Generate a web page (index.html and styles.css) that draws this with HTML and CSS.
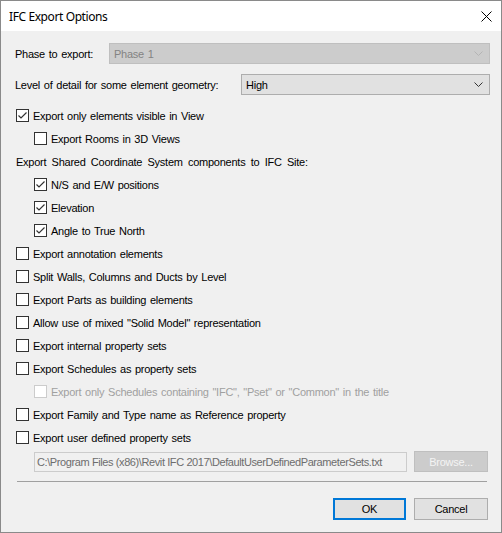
FILE: index.html
```html
<!DOCTYPE html>
<html>
<head>
<meta charset="utf-8">
<link rel="stylesheet" href="styles.css">
</head>
<body>
<div class="window">
  <div class="titlebar">
    <span class="title">IFC Export Options</span>
    <svg class="close" width="11" height="11" viewBox="0 0 11 11"><path d="M0.5 0.5 L10.5 10.5 M10.5 0.5 L0.5 10.5" stroke="#000" stroke-width="1"/></svg>
  </div>
  <div class="content">
    <div class="field phase">
      <span class="label">Phase to export:</span>
      <div class="combo disabled">
        <span>Phase 1</span>
        <svg class="chev" width="9" height="5" viewBox="0 0 9 5"><path d="M0.5 0.5 L4.5 4.5 L8.5 0.5" fill="none" stroke="#b4b4b4" stroke-width="1"/></svg>
      </div>
    </div>
    <div class="field level">
      <span class="label">Level of detail for some element geometry:</span>
      <div class="combo high">
        <span>High</span>
        <svg class="chev" width="9" height="5" viewBox="0 0 9 5"><path d="M0.5 0.5 L4.5 4.5 L8.5 0.5" fill="none" stroke="#333" stroke-width="1"/></svg>
      </div>
    </div>
    <div class="rows">
      <div class="row"><span class="box checked"><svg width="11" height="11" viewBox="0 0 11 11"><path d="M1.5 5.5 L4 8 L9.5 2.5" fill="none" stroke="#333" stroke-width="1.2"/></svg></span><span>Export only elements visible in View</span></div>
      <div class="row ind"><span class="box"></span><span>Export Rooms in 3D Views</span></div>
      <div class="row"><span class="plain">Export Shared Coordinate System components to IFC Site:</span></div>
      <div class="row ind"><span class="box checked"><svg width="11" height="11" viewBox="0 0 11 11"><path d="M1.5 5.5 L4 8 L9.5 2.5" fill="none" stroke="#333" stroke-width="1.2"/></svg></span><span>N/S and E/W positions</span></div>
      <div class="row ind"><span class="box checked"><svg width="11" height="11" viewBox="0 0 11 11"><path d="M1.5 5.5 L4 8 L9.5 2.5" fill="none" stroke="#333" stroke-width="1.2"/></svg></span><span>Elevation</span></div>
      <div class="row ind"><span class="box checked"><svg width="11" height="11" viewBox="0 0 11 11"><path d="M1.5 5.5 L4 8 L9.5 2.5" fill="none" stroke="#333" stroke-width="1.2"/></svg></span><span>Angle to True North</span></div>
      <div class="row"><span class="box"></span><span>Export annotation elements</span></div>
      <div class="row"><span class="box"></span><span>Split Walls, Columns and Ducts by Level</span></div>
      <div class="row"><span class="box"></span><span>Export Parts as building elements</span></div>
      <div class="row"><span class="box"></span><span>Allow use of mixed "Solid Model" representation</span></div>
      <div class="row"><span class="box"></span><span>Export internal property sets</span></div>
      <div class="row"><span class="box"></span><span>Export Schedules as property sets</span></div>
      <div class="row ind dis"><span class="box"></span><span>Export only Schedules containing "IFC", "Pset" or "Common" in the title</span></div>
      <div class="row"><span class="box"></span><span>Export Family and Type name as Reference property</span></div>
      <div class="row"><span class="box"></span><span>Export user defined property sets</span></div>
    </div>
    <div class="pathrow">
      <div class="textbox">C:\Program Files (x86)\Revit IFC 2017\DefaultUserDefinedParameterSets.txt</div>
      <div class="btn btn-dis">Browse...</div>
    </div>
    <div class="sep"></div>
    <div class="actions">
      <div class="btn ok">OK</div>
      <div class="btn">Cancel</div>
    </div>
  </div>
</div>
</body>
</html>
```

FILE: styles.css
```css
html, body {
  margin: 0;
  padding: 0;
  background: #f0f0f0;
}
.window {
  width: 502px;
  height: 533px;
  box-sizing: border-box;
  border: 1px solid #8a8a8a;
  background: #f0f0f0;
  font-family: "Liberation Sans", Arial, sans-serif;
  font-size: 11px;
  letter-spacing: -0.25px;
  word-spacing: 1px;
  color: #000;
  display: flex;
  flex-direction: column;
}
.titlebar {
  height: 30px;
  background: #fff;
  display: flex;
  align-items: center;
  justify-content: space-between;
  padding: 0 9px 0 8px;
  flex-shrink: 0;
}
.title {
  font-family: "Noto Sans", "Open Sans", sans-serif;
  font-size: 12px;
  letter-spacing: -0.4px;
  word-spacing: 0;
  color: #000;
}
.close {
  display: block;
}
.content {
  display: flex;
  flex-direction: column;
  padding: 12px 11px 0 14px;
}
.field {
  display: flex;
  align-items: center;
  height: 21px;
}
.level {
  margin-top: 10px;
}
.label {
  flex-shrink: 0;
}
.phase .label {
  width: 94px;
}
.level .label {
  width: 226px;
}
.combo {
  flex: 1;
  box-sizing: border-box;
  height: 21px;
  border: 1px solid #adadad;
  background: #e1e1e1;
  display: flex;
  align-items: center;
  justify-content: space-between;
  padding: 0 6px 0 4px;
}
.combo.disabled {
  background: #cccccc;
  border-color: #bfbfbf;
  color: #838383;
}
.rows {
  display: flex;
  flex-direction: column;
  margin-top: 9px;
}
.row {
  height: 23px;
  display: flex;
  align-items: center;
  padding-left: 1px;
}
.row.ind {
  padding-left: 19px;
}
.plain {
  word-spacing: 2.5px;
}
.box {
  box-sizing: border-box;
  width: 13px;
  height: 13px;
  border: 1px solid #333;
  background: #fff;
  margin-right: 4px;
  flex-shrink: 0;
  display: flex;
  align-items: center;
  justify-content: center;
}
.box svg {
  display: block;
}
.row.dis {
  color: #a0a0a0;
}
.row.dis .box {
  border-color: #cccccc;
}
.pathrow {
  display: flex;
  align-items: center;
  margin-top: 2px;
  padding-left: 19px;
}
.textbox {
  box-sizing: border-box;
  width: 373px;
  height: 20px;
  border: 1px solid #cccccc;
  background: #f0f0f0;
  color: #6d6d6d;
  display: flex;
  align-items: center;
  padding-left: 2px;
  white-space: nowrap;
  overflow: hidden;
  letter-spacing: -0.4px;
  word-spacing: 0;
}
.btn {
  box-sizing: border-box;
  width: 74px;
  height: 21px;
  border: 1px solid #adadad;
  background: #e1e1e1;
  display: flex;
  align-items: center;
  justify-content: center;
}
.pathrow .btn {
  margin-left: 7px;
}
.btn-dis {
  background: #cccccc;
  border-color: #bfbfbf;
  color: #f4f4f4;
}
.sep {
  height: 1px;
  background: #a0a0a0;
  margin: 9px 3px 0 2px;
}
.actions {
  display: flex;
  justify-content: flex-end;
  gap: 8px;
  margin-top: 16px;
  padding-right: 2px;
}
.actions .btn {
  height: 22px;
}
.btn.ok {
  width: 73px;
  border: 2px solid #0078d7;
}
```
